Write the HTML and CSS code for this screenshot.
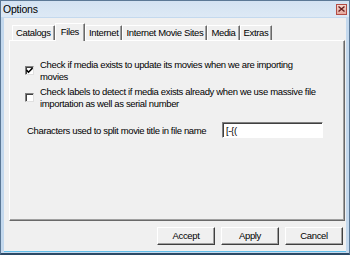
FILE: index.html
```html
<!DOCTYPE html>
<html lang="en">
<head>
    <meta charset="UTF-8">
    <title>Options</title>
    <link rel="stylesheet" href="styles.css">
</head>
<body>
    <div class="window">
        <div class="titlebar">
            <span class="title">Options</span>
            <span class="close">
                <svg width="7" height="6" viewBox="0 0 7 6"><path d="M0.5 0.5 L6.5 5.5 M6.5 0.5 L0.5 5.5" stroke="#6b2020" stroke-width="1.4"/></svg>
            </span>
        </div>

        <div class="client">
            <!-- tab strip -->
            <div class="tabs">
                <div class="tab">Catalogs</div>
                <div class="tab active">Files</div>
                <div class="tab">Internet</div>
                <div class="tab">Internet Movie Sites</div>
                <div class="tab">Media</div>
                <div class="tab">Extras</div>
            </div>

            <div class="panel">
                <label class="check-row">
                    <span class="box">
                        <svg width="7" height="7" viewBox="0 0 7 7"><path d="M0.5 3 L2.5 5.2 L6.5 1" fill="none" stroke="#000" stroke-width="1.6"/></svg>
                    </span>
                    <span class="check-text">Check if media exists to update its movies when we are importing movies</span>
                </label>
                <label class="check-row">
                    <span class="box"></span>
                    <span class="check-text">Check labels to detect if media exists already when we use massive file importation as well as serial number</span>
                </label>

                <div class="field-row">
                    <span class="field-label">Characters used to split movie title in file name</span>
                    <span class="input">[-{(</span>
                </div>
            </div>

            <div class="buttons">
                <div class="btn">Accept</div>
                <div class="btn">Apply</div>
                <div class="btn">Cancel</div>
            </div>
        </div>
    </div>
</body>
</html>
```

FILE: styles.css
```css
body {
    margin: 0;
    font-family: "Liberation Sans", Arial, sans-serif;
    font-size: 9.5px;
    letter-spacing: -0.35px;
    color: #000;
    background: #fff;
}
.window {
    width: 350px;
    height: 255px;
    box-sizing: border-box;
    display: flex;
    flex-direction: column;
    background: #c4d9ee;
    border: 1px solid #5b7896;
    border-bottom: 2px solid #2c4a66;
}
.titlebar {
    height: 16px;
    flex: none;
    display: flex;
    align-items: center;
    justify-content: space-between;
    padding: 0 2px 0 2px;
    background: linear-gradient(#d3e2f2, #dde9f5);
}
.title {
    font-size: 10.5px;
    letter-spacing: -0.2px;
}
.close {
    width: 11px;
    height: 11px;
    box-sizing: border-box;
    border: 1px solid #b44c44;
    background: linear-gradient(#f6d7cf, #e4a79c);
    display: flex;
    align-items: center;
    justify-content: center;
}
.client {
    flex: 1;
    margin: 1px 3px 1px 3px;
    background: #f0f0f0;
    border-bottom: 1px solid #62c0ea;
    display: flex;
    flex-direction: column;
}
.tabs {
    display: flex;
    align-items: flex-end;
    height: 22px;
    flex: none;
    padding-left: 8px;
}
.tab {
    height: 14px;
    line-height: 14px;
    padding: 0 3px;
    border-top: 1px solid #fff;
    border-left: 1px solid #fff;
    border-right: 1px solid #696969;
    box-shadow: inset -1px 0 #a0a0a0;
    border-radius: 1px 1px 0 0;
}
.tab.active {
    height: 17px;
    line-height: 15px;
    margin-bottom: -1px;
    padding: 0 5px 0 5px;
    background: #f0f0f0;
    position: relative;
    z-index: 1;
}
.panel {
    height: 181px;
    flex: none;
    box-sizing: border-box;
    margin: 0 1px 0 5px;
    border-top: 1px solid #fff;
    border-left: 1px solid #fff;
    border-right: 1px solid #696969;
    border-bottom: 1px solid #696969;
    box-shadow: inset -1px -1px #a0a0a0;
    padding: 18px 0 0 15px;
}
.check-row {
    display: flex;
    align-items: flex-start;
    margin-bottom: 3px;
}
.box {
    width: 9px;
    height: 9px;
    box-sizing: border-box;
    margin-top: 7px;
    margin-right: 6px;
    flex: none;
    background: #fff;
    border-top: 1px solid #808080;
    border-left: 1px solid #808080;
    border-right: 1px solid #e0e0e0;
    border-bottom: 1px solid #e0e0e0;
    box-shadow: inset 1px 1px #404040;
    display: flex;
    align-items: center;
    justify-content: center;
}
.check-text {
    width: 278px;
    line-height: 12px;
}
.field-row {
    display: flex;
    align-items: center;
    margin-top: 12px;
    padding-left: 2px;
}
.field-label {
    width: 195px;
}
.input {
    width: 101px;
    height: 16px;
    box-sizing: border-box;
    background: #fff;
    border-top: 1px solid #808080;
    border-left: 1px solid #808080;
    border-right: 1px solid #fff;
    border-bottom: 1px solid #fff;
    box-shadow: inset 1px 1px #404040;
    padding: 2px 3px;
    line-height: 11px;
}
.buttons {
    display: flex;
    justify-content: flex-end;
    gap: 6px;
    margin-top: 6px;
    padding-right: 3px;
}
.btn {
    width: 58px;
    height: 18px;
    box-sizing: border-box;
    text-align: center;
    line-height: 15px;
    background: #f0f0f0;
    border-top: 1px solid #fff;
    border-left: 1px solid #fff;
    border-right: 1px solid #404040;
    border-bottom: 1px solid #404040;
    box-shadow: inset -1px -1px #a0a0a0;
}
```
